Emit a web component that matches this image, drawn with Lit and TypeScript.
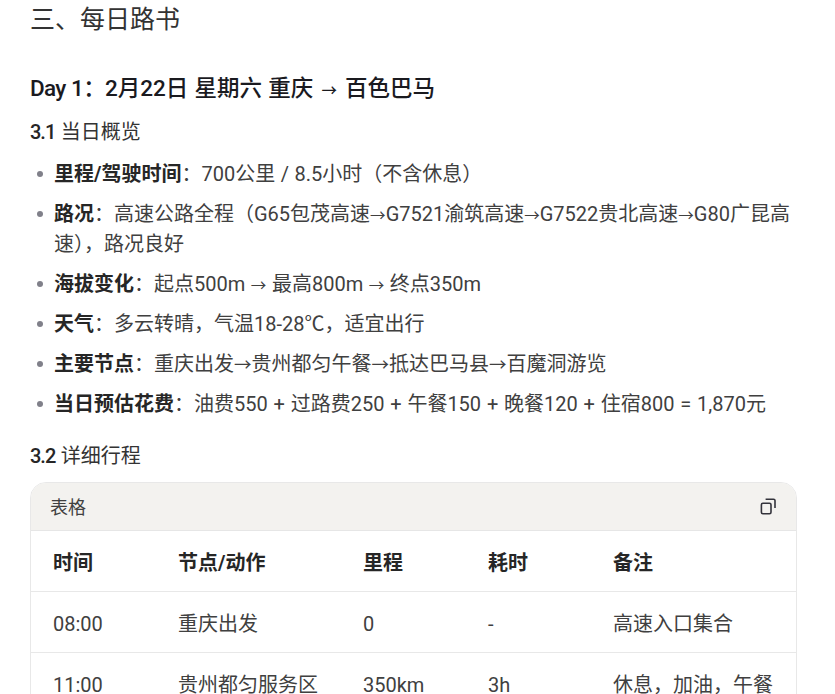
import { LitElement, html, css } from "lit";
import { customElement } from "lit/decorators.js";

const items = [
  ["里程/驾驶时间", "：700公里 / 8.5小时（不含休息）", ""],
  ["路况", "：高速公路全程（G65包茂高速→G7521渝筑高速→G7522贵北高速→G80广昆高速），路况良好", ""],
  ["海拔变化", "：起点500m → 最高800m → 终点350m", ""],
  ["天气", "：多云转晴，气温18-28℃，适宜出行", ""],
  ["主要节点", "：重庆出发→贵州都匀午餐→抵达巴马县→百魔洞游览", "wide"],
  ["当日预估花费", "：油费550 + 过路费250 + 午餐150 + 晚餐120 + 住宿800 = 1,870元", ""],
];
const head = ["时间", "节点/动作", "里程", "耗时", "备注"];
const rows = [
  ["08:00", "重庆出发", "0", "-", "高速入口集合"],
  ["11:00", "贵州都匀服务区", "350km", "3h", "休息，加油，午餐"],
];

const arrows = (s: string, cls = "") =>
  s.split("→").map((part, i) => (i === 0 ? part : html`<span class="ar ${cls}">→</span>${part}`));

@customElement("app-root")
export class AppRoot extends LitElement {
  static styles = css`
    :host {
      display: block;
      height: 694px;
      overflow: hidden;
      background: #fff;
      color: #262626;
      font-family: Roboto, "Noto Sans CJK SC", sans-serif;
      font-size: 20px;
      line-height: 30px;
      word-spacing: 0.6px;
    }
    .page { padding: 0 38px 0 30px; }
    .ar { font-size: 15.5px; line-height: 1; }
    .ar.wide { font-size: 17.5px; }
    h2 {
      margin: 0;
      font-size: 25px;
      font-weight: 400;
      line-height: 40px;
      color: #333;
    }
    h3 {
      margin: 29px 0 0;
      font-size: 22.5px;
      font-weight: 500;
      line-height: 38px;
      color: #1a1a1f;
    }
    h3 .ar { margin: 0 2px; }
    .day { letter-spacing: -0.7px; }
    h4 {
      margin: 10px 0 0;
      font-size: 20px;
      font-weight: 400;
      line-height: 30px;
      color: #333;
    }
    h4 b { font-weight: 500; color: #262626; letter-spacing: -1px; }
    ul { list-style: none; margin: 12px 0 0; padding: 0; }
    li {
      position: relative;
      padding-left: 24px;
      margin-bottom: 10px;
      color: #404040;
    }
    li:last-child { word-spacing: 0.85px; }
    li::before {
      content: "";
      position: absolute;
      left: 7px;
      top: 12px;
      width: 6px;
      height: 6px;
      border-radius: 50%;
      background: #80808a;
    }
    li b { font-weight: 700; color: #262626; }
    .sec2 { margin-top: 22px; }
    .card {
      margin-top: 11px;
      border: 1px solid #e8e8e8;
      border-radius: 16px;
      overflow: hidden;
    }
    .bar {
      display: flex;
      align-items: center;
      justify-content: space-between;
      height: 47px;
      padding: 0 20px 0 19px;
      background: #f3f2ef;
      border-bottom: 1px solid #e6e6e6;
      font-size: 18px;
      color: #404040;
    }
    .bar span { padding-top: 2px; }
    .bar svg { display: block; }
    .row {
      display: grid;
      grid-template-columns: 125px 185px 125px 125px 1fr;
      height: 56px;
      padding: 4px 0 0 22px;
      align-items: center;
      border-bottom: 1px solid #e8e8e8;
      color: #404040;
    }
    .row.h { font-weight: 700; color: #262626; }
  `;

  render() {
    return html`
      <div class="page">
        <h2>三、每日路书</h2>
        <h3><span class="day">Day 1：</span>2月22日 星期六 重庆 ${arrows("→ 百色巴马")}</h3>
        <h4><b>3.1</b> 当日概览</h4>
        <ul>
          ${items.map(([k, v, cls]) => html`<li><b>${k}</b>${arrows(v, cls)}</li>`)}
        </ul>
        <h4 class="sec2"><b>3.2</b> 详细行程</h4>
        <div class="card">
          <div class="bar">
            <span>表格</span>
            <svg width="18" height="18" viewBox="0 0 18 18" fill="none" stroke="#33333b" stroke-width="1.6">
              <rect x="3.4" y="5.3" width="9.6" height="10.4" rx="1.5"></rect>
              <path d="M7.6 1.2 H15.6 a1.4 1.4 0 0 1 1.4 1.4 V10"></path>
            </svg>
          </div>
          <div class="row h">${head.map((c) => html`<span>${c}</span>`)}</div>
          ${rows.map((r) => html`<div class="row">${r.map((c) => html`<span>${c}</span>`)}</div>`)}
        </div>
      </div>
    `;
  }
}
